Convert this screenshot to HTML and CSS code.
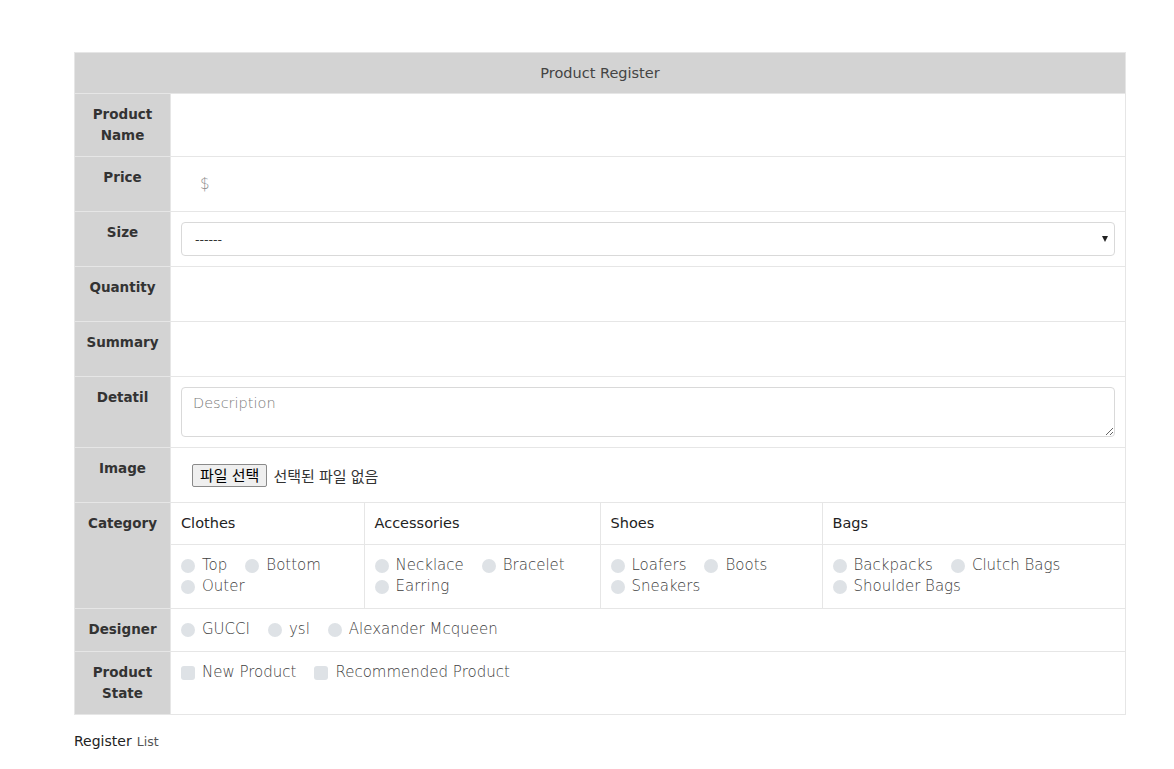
FILE: index.html
```html
<!DOCTYPE html>
<html lang="ko">
<head>
<meta charset="utf-8">
<title>Product Register</title>
<link rel="stylesheet" href="styles.css">
</head>
<body>
<div class="page">
  <table class="reg">
    <colgroup><col class="c-label"><col></colgroup>
    <thead>
      <tr><th colspan="2" class="title">Product Register</th></tr>
    </thead>
    <tbody>
      <tr><th class="lbl">Product<br>Name</th><td class="val"><div class="blank"></div></td></tr>
      <tr><th class="lbl">Price</th><td class="val"><div class="price"><span class="dollar">$</span></div></td></tr>
      <tr><th class="lbl">Size</th><td class="val"><div class="select"><span class="sel-text">------</span></div></td></tr>
      <tr><th class="lbl">Quantity</th><td class="val"><div class="blank"></div></td></tr>
      <tr><th class="lbl">Summary</th><td class="val"><div class="blank"></div></td></tr>
      <tr><th class="lbl">Detatil</th><td class="val"><textarea class="desc" placeholder="Description"></textarea></td></tr>
      <tr><th class="lbl">Image</th><td class="val"><div class="file"><span class="file-btn">파일 선택</span><span class="file-name">선택된 파일 없음</span></div></td></tr>
      <tr>
        <th class="lbl">Category</th>
        <td class="nest-cell">
          <table class="nest">
            <colgroup><col class="n1"><col class="n2"><col class="n3"><col class="n4"></colgroup>
            <tr class="nhead"><td>Clothes</td><td>Accessories</td><td>Shoes</td><td>Bags</td></tr>
            <tr class="nopts">
              <td><div class="optwrap"><span class="opt"><i class="radio"></i>Top</span><span class="opt"><i class="radio"></i>Bottom</span><span class="opt"><i class="radio"></i>Outer</span></div></td>
              <td><div class="optwrap"><span class="opt"><i class="radio"></i>Necklace</span><span class="opt"><i class="radio"></i>Bracelet</span><span class="opt"><i class="radio"></i>Earring</span></div></td>
              <td><div class="optwrap"><span class="opt"><i class="radio"></i>Loafers</span><span class="opt"><i class="radio"></i>Boots</span><span class="opt"><i class="radio"></i>Sneakers</span></div></td>
              <td><div class="optwrap"><span class="opt"><i class="radio"></i>Backpacks</span><span class="opt"><i class="radio"></i>Clutch Bags</span><span class="opt"><i class="radio"></i>Shoulder Bags</span></div></td>
            </tr>
          </table>
        </td>
      </tr>
      <tr><th class="lbl">Designer</th><td class="val designer"><div class="optwrap"><span class="opt"><i class="radio"></i>GUCCI</span><span class="opt"><i class="radio"></i>ysl</span><span class="opt"><i class="radio"></i>Alexander Mcqueen</span></div></td></tr>
      <tr><th class="lbl">Product<br>State</th><td class="val"><div class="optwrap"><span class="opt"><i class="check"></i>New Product</span><span class="opt"><i class="check"></i>Recommended Product</span></div></td></tr>
    </tbody>
  </table>
  <div class="links"><a class="reg-link">Register</a> <a class="list-link">List</a></div>
</div>
</body>
</html>
```

FILE: styles.css
```css
html, body {
  margin: 0;
  padding: 0;
  background: #fff;
}
body {
  font-family: "DejaVu Sans", "Noto Sans CJK KR", sans-serif;
  color: #333;
}
.page {
  padding: 52px 0 0 74px;
  width: 1052px;
}
.reg {
  width: 1052px;
  border-collapse: collapse;
  table-layout: fixed;
}
.c-label { width: 96px; }
.reg th, .reg td {
  border: 1px solid #e6e6e6;
  padding: 10px;
  line-height: 21px;
  vertical-align: top;
}
.reg th.title {
  background: #d3d3d3;
  font-weight: normal;
  font-size: 14.5px;
  color: #444;
  text-align: center;
  padding-bottom: 9px;
}
.lbl {
  background: #d3d3d3;
  font-weight: bold;
  font-size: 13.5px;
  color: #333;
  text-align: center;
  border-color: #e9e9e9;
}
.val { background: #fff; }
.reg td.designer { padding-bottom: 11px; }
.blank { height: 34px; }
.price {
  height: 34px;
  display: flex;
  align-items: center;
  padding-left: 19px;
}
.dollar {
  color: #8f8f8f;
  font-size: 15px;
  font-weight: 300;
}
.select {
  position: relative;
  height: 32px;
  border: 1px solid #d9d9d9;
  border-radius: 4px;
  display: flex;
  align-items: center;
  padding-left: 13px;
}
.sel-text {
  font-size: 12.5px;
  color: #333;
}
.select::after {
  content: "";
  position: absolute;
  right: 6px;
  top: 13px;
  border-left: 3.5px solid transparent;
  border-right: 3.5px solid transparent;
  border-top: 6px solid #222;
}
.desc {
  display: block;
  box-sizing: border-box;
  width: 100%;
  height: 50px;
  margin: 0;
  border: 1px solid #d9d9d9;
  border-radius: 4px;
  padding: 6px 11px;
  font-family: "DejaVu Sans", sans-serif;
  font-size: 14.5px;
  line-height: 18px;
  color: #333;
}
.desc::placeholder { color: #7a7a7a; font-weight: 300; }
.file {
  height: 34px;
  display: flex;
  align-items: center;
  padding-left: 11px;
  font-family: "Noto Sans CJK KR", sans-serif;
  font-size: 15px;
}
.file-btn {
  box-sizing: border-box;
  height: 23px;
  line-height: 20px;
  padding: 0 7px;
  background: #efefef;
  border: 1px solid #8a8a8a;
  border-radius: 2px;
  color: #000;
}
.file-name {
  margin-left: 6px;
  color: #333;
}
.nest-cell { padding: 0 !important; }
.nest {
  width: 100%;
  border-collapse: collapse;
  border-style: hidden;
  table-layout: fixed;
}
.n1 { width: 193px; }
.n2 { width: 236px; }
.n3 { width: 222px; }
.nest td {
  border: 1px solid #e6e6e6;
  padding: 10px;
  line-height: 21px;
  vertical-align: top;
}
.nhead td {
  font-size: 14.5px;
  color: #222;
}
.nopts td { padding-bottom: 11px; }
.optwrap {
  display: flex;
  flex-wrap: wrap;
}
.opt {
  display: flex;
  align-items: center;
  height: 21px;
  white-space: nowrap;
  margin-right: 18px;
  font-size: 15px;
  font-weight: 300;
  color: #404040;
}
.radio, .check {
  display: block;
  flex: none;
  width: 14px;
  height: 14px;
  margin-right: 7px;
  background: #dee2e6;
}
.radio { border-radius: 50%; }
.check { border-radius: 3px; }
.links {
  margin-top: 15px;
  line-height: 21px;
}
.reg-link {
  font-size: 14px;
  color: #222;
}
.list-link {
  font-size: 12.5px;
  color: #555;
}
```
